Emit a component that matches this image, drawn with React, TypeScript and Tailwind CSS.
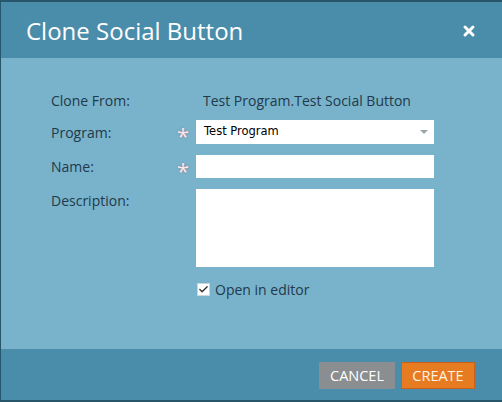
import { Check, X } from 'lucide-react';

const FONT = { fontFamily: '"Open Sans", "Liberation Sans", sans-serif' };

function Asterisk() {
  return (
    <span className="w-[26px] flex justify-center text-[22px] leading-none text-[#fbe8ec] pt-[6px] [text-shadow:0_0_2px_#9a6b7a]">
      *
    </span>
  );
}

export default function App() {
  return (
    <div className="w-[502px] h-[402px] bg-[#27556a] pt-[2px] pl-[1px] pb-[2px]" style={FONT}>
      <div className="w-[501px] h-[398px] flex flex-col">
        <div className="h-[56px] bg-[#4a8dab] flex items-center justify-between pl-[25px] pr-[25px] pt-[2px]">
          <span className="text-[24px] text-white leading-none">Clone Social Button</span>
          <X className="w-[16px] h-[16px] text-white" strokeWidth={4.5} />
        </div>
        <div className="h-[291px] bg-[#78b3cb] pl-[50px] pt-[32px] text-[14px] text-[#22394a]">
          <div className="flex items-center h-[20px]">
            <span className="w-[152px]">Clone From:</span>
            <span>Test Program.Test Social Button</span>
          </div>
          <div className="flex items-center mt-[10px] h-[24px]">
            <span className="w-[119px]">Program:</span>
            <Asterisk />
            <div className="w-[238px] h-[24px] bg-white flex items-center justify-between pl-[8px] pr-[6px]">
              <span className="text-black" style={{ fontFamily: '"DejaVu Sans", sans-serif', fontSize: 11.5 }}>
                Test Program
              </span>
              <span className="w-0 h-0 border-l-[4px] border-r-[4px] border-t-[4px] border-l-transparent border-r-transparent border-t-[#9aa3a8]" />
            </div>
          </div>
          <div className="flex items-center mt-[11px] h-[23px]">
            <span className="w-[119px]">Name:</span>
            <Asterisk />
            <div className="w-[238px] h-[23px] bg-white" />
          </div>
          <div className="flex items-start mt-[11px]">
            <span className="w-[145px] pt-[1px]">Description:</span>
            <div className="w-[238px] h-[78px] bg-white" />
          </div>
          <div className="flex items-center mt-[12px] ml-[146px] gap-[5px]">
            <span className="w-[13px] h-[13px] bg-white border border-[#c9d6dc] flex items-center justify-center">
              <Check className="w-[13px] h-[13px] text-[#333]" strokeWidth={3} />
            </span>
            <span className="text-[14px]">Open in editor</span>
          </div>
        </div>
        <div className="flex-1 bg-[#4a8dab] flex items-center justify-end pr-[27px] gap-[6px] pt-[2px]">
          <button className="w-[76px] h-[27px] bg-[#8a8e91] text-white text-[14.5px] uppercase">Cancel</button>
          <button className="w-[74px] h-[27px] bg-[#e77b22] border border-[#c8621a] text-[#fff3e0] text-[14.5px] uppercase">
            Create
          </button>
        </div>
      </div>
    </div>
  );
}
